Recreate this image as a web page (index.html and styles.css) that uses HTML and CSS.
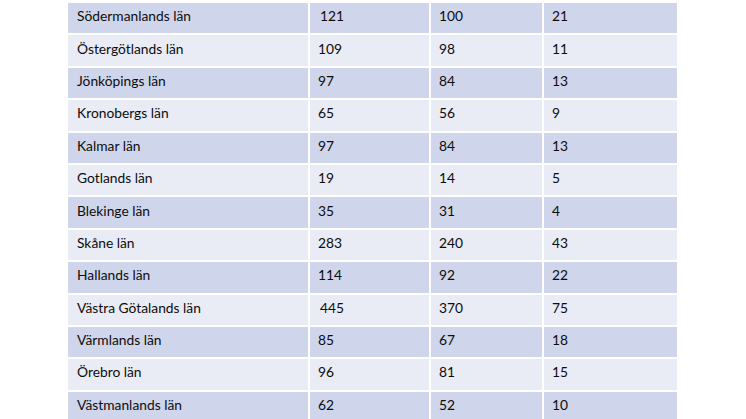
FILE: index.html
```html
<!DOCTYPE html>
<html lang="sv">
<head>
<meta charset="utf-8">
<link rel="stylesheet" href="styles.css">
</head>
<body>
<div class="table">
  <div class="row dark"><div class="cell">Södermanlands län</div><div class="cell nudge">121</div><div class="cell">100</div><div class="cell">21</div></div>
  <div class="row light"><div class="cell">Östergötlands län</div><div class="cell">109</div><div class="cell">98</div><div class="cell">11</div></div>
  <div class="row dark"><div class="cell">Jönköpings län</div><div class="cell">97</div><div class="cell">84</div><div class="cell">13</div></div>
  <div class="row light"><div class="cell">Kronobergs län</div><div class="cell">65</div><div class="cell">56</div><div class="cell">9</div></div>
  <div class="row dark"><div class="cell">Kalmar län</div><div class="cell">97</div><div class="cell">84</div><div class="cell">13</div></div>
  <div class="row light"><div class="cell">Gotlands län</div><div class="cell">19</div><div class="cell">14</div><div class="cell">5</div></div>
  <div class="row dark"><div class="cell">Blekinge län</div><div class="cell">35</div><div class="cell">31</div><div class="cell">4</div></div>
  <div class="row light"><div class="cell">Skåne län</div><div class="cell">283</div><div class="cell">240</div><div class="cell">43</div></div>
  <div class="row dark"><div class="cell">Hallands län</div><div class="cell">114</div><div class="cell">92</div><div class="cell">22</div></div>
  <div class="row light"><div class="cell">Västra Götalands län</div><div class="cell nudge">445</div><div class="cell">370</div><div class="cell">75</div></div>
  <div class="row dark"><div class="cell">Värmlands län</div><div class="cell">85</div><div class="cell">67</div><div class="cell">18</div></div>
  <div class="row light"><div class="cell">Örebro län</div><div class="cell">96</div><div class="cell">81</div><div class="cell">15</div></div>
  <div class="row dark"><div class="cell">Västmanlands län</div><div class="cell">62</div><div class="cell">52</div><div class="cell">10</div></div>
</div>
</body>
</html>
```
FILE: styles.css
```css
html, body {
  margin: 0;
  padding: 0;
  background: #ffffff;
  overflow: hidden;
}
body {
  font-family: "Lato", "Liberation Sans", sans-serif;
  font-size: 13.8px;
  color: #0d0d0d;
}
.table {
  display: grid;
  grid-template-columns: 240px 119px 111px 133px;
  grid-auto-rows: 30.4px;
  row-gap: 2px;
  column-gap: 2px;
  margin: 3px 0 0 68px;
  width: max-content;
}
.row {
  display: contents;
}
.cell {
  display: flex;
  align-items: center;
  padding: 0 0 5px 8px;
}
.dark .cell { background: #cfd5ea; }
.light .cell { background: #e9ebf5; }
.cell.nudge { padding-left: 10px; }
.cell:first-child { padding-left: 9px; }
```
